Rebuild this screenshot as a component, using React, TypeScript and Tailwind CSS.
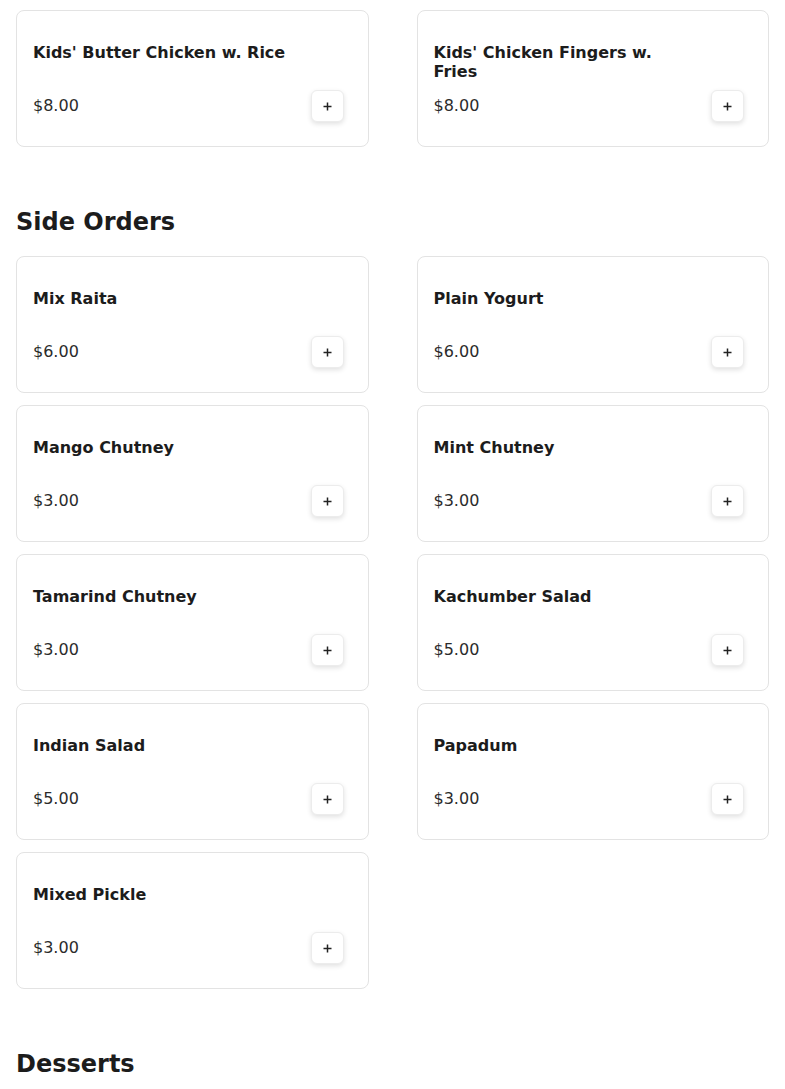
import React from "react";

type Item = { name: string; price: string };

const kids: Item[] = [
  { name: "Kids' Butter Chicken w. Rice", price: "$8.00" },
  { name: "Kids' Chicken Fingers w. Fries", price: "$8.00" },
];

const sides: Item[] = [
  { name: "Mix Raita", price: "$6.00" },
  { name: "Plain Yogurt", price: "$6.00" },
  { name: "Mango Chutney", price: "$3.00" },
  { name: "Mint Chutney", price: "$3.00" },
  { name: "Tamarind Chutney", price: "$3.00" },
  { name: "Kachumber Salad", price: "$5.00" },
  { name: "Indian Salad", price: "$5.00" },
  { name: "Papadum", price: "$3.00" },
  { name: "Mixed Pickle", price: "$3.00" },
];

function PlusIcon() {
  return (
    <svg width="11" height="11" viewBox="0 0 11 11" fill="none">
      <path d="M5.5 1.5v8M1.5 5.5h8" stroke="#222" strokeWidth="1.5" />
    </svg>
  );
}

function Card({ item }: { item: Item }) {
  return (
    <div className="rounded-lg border border-[#e3e3e3] bg-white px-4 pt-8 pb-6">
      <div className="h-10 max-w-[258px] text-base font-bold leading-[19px] text-[#1c1c1c]">
        {item.name}
      </div>
      <div className="mt-[7px] flex h-8 items-center justify-between pr-2">
        <span className="-mt-px text-base leading-6 text-[#2b2b2b]">{item.price}</span>
        <button className="flex h-8 w-[33px] items-center justify-center rounded-md border border-[#ececec] bg-white shadow-[0_2px_5px_rgba(0,0,0,0.12)]">
          <PlusIcon />
        </button>
      </div>
    </div>
  );
}

function Grid({ items }: { items: Item[] }) {
  return (
    <div className="grid grid-cols-2 gap-x-12 gap-y-3">
      {items.map((it) => (
        <Card key={it.name} item={it} />
      ))}
    </div>
  );
}

export default function App() {
  return (
    <div
      className="min-h-screen bg-white px-4 pt-[10px] pb-10"
      style={{ fontFamily: '"DejaVu Sans", sans-serif' }}
    >
      <Grid items={kids} />
      <h2 className="mt-[59px] mb-[18px] text-2xl leading-8 font-bold text-[#1c1c1c]">
        Side Orders
      </h2>
      <Grid items={sides} />
      <h2 className="mt-[59px] mb-[18px] text-2xl leading-8 font-bold text-[#1c1c1c]">
        Desserts
      </h2>
    </div>
  );
}
